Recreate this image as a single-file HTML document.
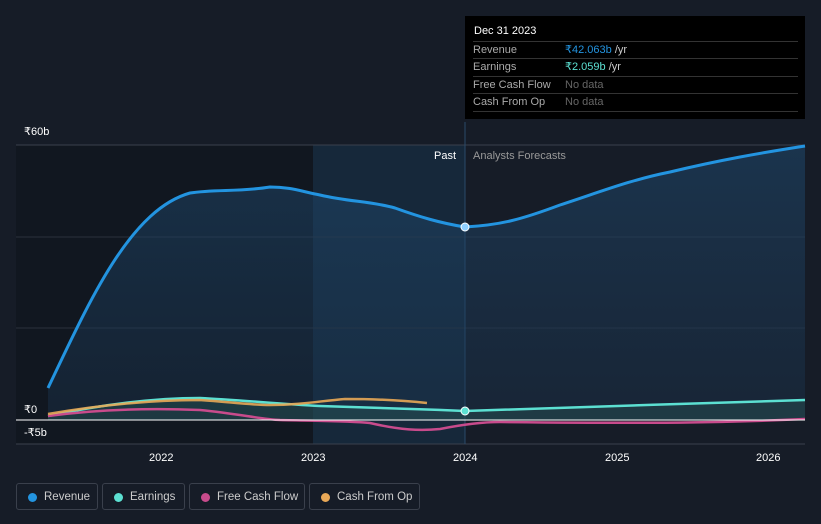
<!DOCTYPE html>
<html><head><meta charset="utf-8"><style>
body{margin:0;width:821px;height:524px;background:#161c27;font-family:"Liberation Sans",sans-serif;overflow:hidden;position:relative}
.t{position:absolute;font-size:11px;color:#fff}
.tip{position:absolute;left:465px;top:16px;width:340px;height:103px;background:#000}
.tip .h{position:absolute;left:9px;top:9px;color:#fff;font-size:11px}
.row{position:absolute;left:8px;width:325px;border-top:1px solid #333;height:17px;font-size:11px;color:#aaa;line-height:17px}
.row span{position:absolute;left:92px}
.leg{position:absolute;top:483px;height:27px;border:1px solid #3a404c;border-radius:3px;color:#ccc;font-size:11.5px;line-height:27px;box-sizing:border-box}
.leg i{position:absolute;left:11px;top:9px;width:9px;height:9px;border-radius:50%}
.leg b{font-weight:normal;position:absolute;left:27px}
</style></head><body>
<svg width="821" height="524" style="position:absolute;left:0;top:0">
<defs><linearGradient id="g" x1="0" y1="0" x2="0" y2="1"><stop offset="0" stop-color="#1f4a70" stop-opacity=".7"/><stop offset="1" stop-color="#1b3550" stop-opacity=".5"/></linearGradient></defs>
<rect x="16" y="145" width="449" height="299" fill="#111720"/>
<rect x="313" y="145" width="152" height="299" fill="#16283a"/>
<line x1="16" y1="145" x2="805" y2="145" stroke="#3a404c"/>
<line x1="16" y1="237" x2="805" y2="237" stroke="#2a303b"/>
<line x1="16" y1="328" x2="805" y2="328" stroke="#2a303b"/>
<line x1="16" y1="444" x2="805" y2="444" stroke="#3a404c"/>
<line x1="465" y1="122" x2="465" y2="444" stroke="#2a4a6a"/>
<path d="M48,388 C90,300 130,210 190,193 C215,189 240,192 270,187 C290,187 300,191 320,195 C350,202 370,201 395,208 C420,217 440,223 465,227 C500,225 520,220 560,205 C600,192 630,180 670,172 C720,160 760,153 805,146 L805,420 L48,420Z" fill="url(#g)" opacity=".75"/>
<path d="M48,388 C90,300 130,210 190,193 C215,189 240,192 270,187 C290,187 300,191 320,195 C350,202 370,201 395,208 C420,217 440,223 465,227 C500,225 520,220 560,205 C600,192 630,180 670,172 C720,160 760,153 805,146" fill="none" stroke="#2394e0" stroke-width="3"/>
<path d="M48,416 C100,405 150,398 200,398 C240,400 280,404 320,406 C380,408 420,409 465,411 L805,400 L805,420 L48,420Z" fill="#2b5a58" opacity=".4"/>
<path d="M48,416 C100,405 150,398 200,398 C240,400 280,404 320,406 C380,408 420,409 465,411 C560,408 700,403 805,400" fill="none" stroke="#5ce0d2" stroke-width="2.5"/>
<path d="M48,416 C100,409 150,408 200,410 C240,414 260,419 280,420 C320,421 350,421 370,423 C400,430 420,431 440,429 C460,425 480,422 500,422 C600,423 700,424 805,419" fill="none" stroke="#c84b8c" stroke-width="2.5"/>
<path d="M48,414 C100,405 150,400 200,400 C230,402 250,405 270,405 C300,405 320,401 345,399 C370,399 400,400 427,403" fill="none" stroke="#e8a857" stroke-width="2.5" opacity=".9"/>
<line x1="16" y1="420" x2="805" y2="420" stroke="#fff" stroke-width="1"/>
<circle cx="465" cy="227" r="4" fill="#8fd0ff" stroke="#fff"/>
<circle cx="465" cy="411" r="4" fill="#5ce0d2" stroke="#fff"/>
</svg>
<div class="t" style="left:24px;top:125px">₹60b</div>
<div class="t" style="left:24px;top:403px">₹0</div>
<div class="t" style="left:24px;top:426px">-₹5b</div>
<div class="t" style="left:434px;top:150px">Past</div>
<div class="t" style="left:473px;top:150px;color:#999">Analysts Forecasts</div>
<div class="t" style="left:149px;top:452px">2022</div>
<div class="t" style="left:301px;top:452px">2023</div>
<div class="t" style="left:453px;top:452px">2024</div>
<div class="t" style="left:605px;top:452px">2025</div>
<div class="t" style="left:756px;top:452px">2026</div>
<div class="tip"><div class="h">Dec 31 2023</div>
<div class="row" style="top:25px">Revenue<span style="color:#2394e0">₹42.063b <i style="font-style:normal;color:#ccc">/yr</i></span></div>
<div class="row" style="top:42px">Earnings<span style="color:#5ce0d2">₹2.059b <i style="font-style:normal;color:#ccc">/yr</i></span></div>
<div class="row" style="top:60px">Free Cash Flow<span style="color:#666">No data</span></div>
<div class="row" style="top:77px;border-bottom:1px solid #333">Cash From Op<span style="color:#666">No data</span></div>
</div>
<div class="leg" style="left:16px;width:82px"><i style="background:#2394e0"></i><b>Revenue</b></div>
<div class="leg" style="left:102px;width:83px"><i style="background:#5ce0d2"></i><b>Earnings</b></div>
<div class="leg" style="left:189px;width:116px"><i style="background:#c84b8c"></i><b>Free Cash Flow</b></div>
<div class="leg" style="left:309px;width:111px"><i style="background:#e8a857"></i><b>Cash From Op</b></div>
</body></html>
